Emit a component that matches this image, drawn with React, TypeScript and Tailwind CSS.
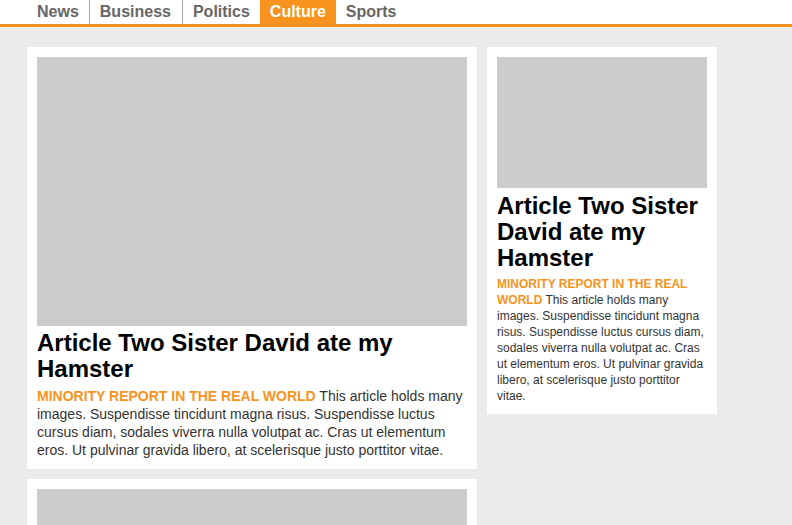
const NAV = ['News', 'Business', 'Politics', 'Culture', 'Sports'];

const BODY =
  'This article holds many images. Suspendisse tincidunt magna risus. Suspendisse luctus cursus diam, sodales viverra nulla volutpat ac. Cras ut elementum eros. Ut pulvinar gravida libero, at scelerisque justo porttitor vitae.';

function Card({ wide }: { wide?: boolean }) {
  return (
    <article className={`bg-white p-[10px] ${wide ? 'w-[450px]' : 'w-[230px]'}`}>
      <div className={`bg-[#cccccc] ${wide ? 'h-[269px]' : 'h-[131px]'}`} />
      <h2 className={`${wide ? 'mt-[4px]' : 'mt-[5px]'} text-[24px] font-bold leading-[26px] text-black`}>
        Article Two Sister David ate my Hamster
      </h2>
      <p
        className={
          wide
            ? 'mt-[5px] text-[14px] leading-[18px] text-[#333]'
            : 'mt-[5px] text-[12px] leading-[16px] text-[#333]'
        }
      >
        <span className="font-bold uppercase text-[#f7931e]">Minority report in the real world</span>{' '}
        {BODY}
      </p>
    </article>
  );
}

export default function App() {
  return (
    <div className="min-h-[525px] bg-[#ebebeb] font-['Liberation_Sans',Arial,sans-serif]">
      <nav className="flex h-[27px] border-b-[3px] border-[#f7931e] bg-white pl-[27px]">
        {NAV.map((item, i) => (
          <a
            key={item}
            className={`block h-[24px] text-[16px] font-bold leading-[23px] ${
              item === 'Business' ? 'pl-[10px] pr-[11px]' : 'px-[10px]'
            } ${item === 'Culture' ? 'bg-[#f7931e] text-white' : 'text-[#666]'} ${
              i < 2 ? 'border-r border-[#aaa]' : ''
            }`}
          >
            {item}
          </a>
        ))}
      </nav>
      <main className="flex items-start gap-[10px] pl-[27px] pt-[20px]">
        <div className="flex flex-col gap-[10px]">
          <Card wide />
          <Card wide />
        </div>
        <Card />
      </main>
    </div>
  );
}
